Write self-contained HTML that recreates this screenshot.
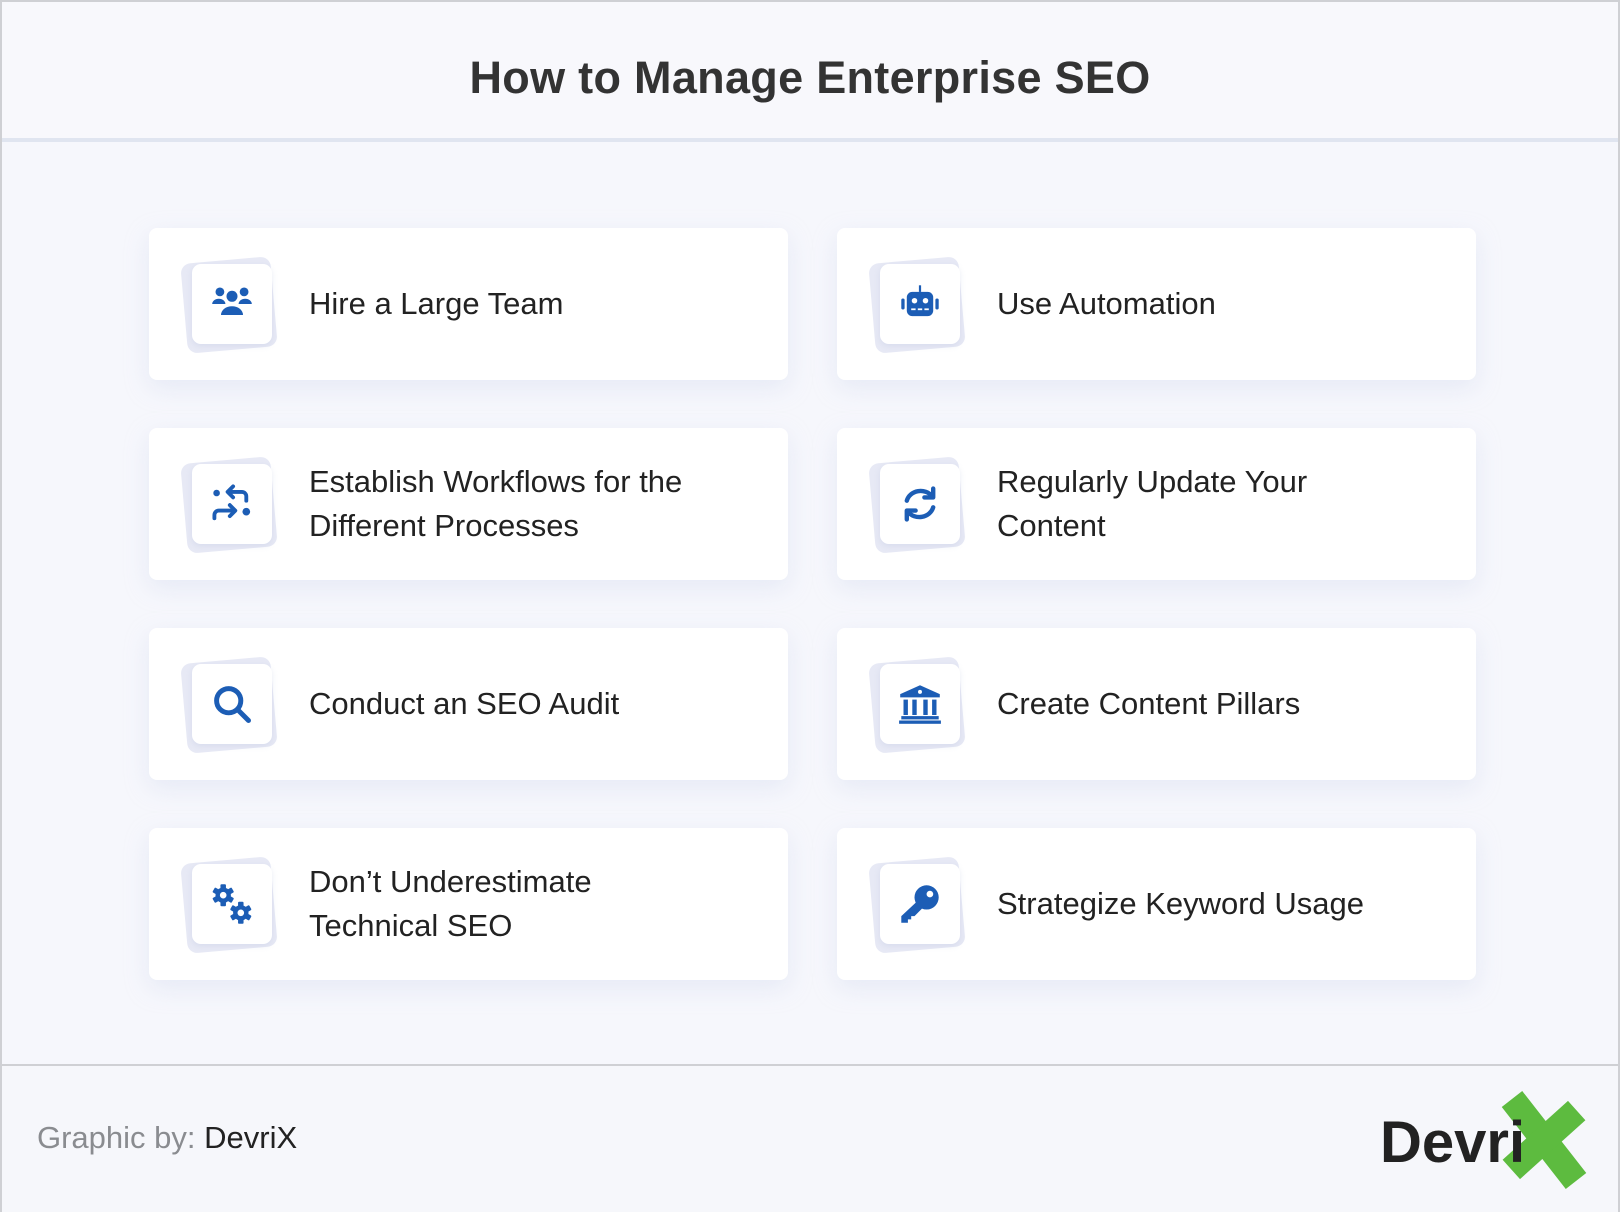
<!DOCTYPE html>
<html><head><meta charset="utf-8"><style>
*{margin:0;padding:0;box-sizing:border-box}
body{width:1620px;height:1212px;background:#f6f7fc;font-family:"Liberation Sans",sans-serif;position:relative;overflow:hidden;border:2px solid #cfd0d4}
.hdr{position:absolute;left:0;top:0;width:1616px;height:140px;background:#f8f8fc;border-bottom:4px solid #e0e5f0}
h1{position:absolute;left:0;right:0;top:50px;text-align:center;font-size:45px;font-weight:bold;color:#333;letter-spacing:0.3px}
.card{position:absolute;width:639px;height:152px;background:#fff;border-radius:8px;box-shadow:0 8px 24px rgba(200,208,235,0.35)}
.ib{position:absolute;left:43px;top:36px;width:80px;height:80px}
.ib .bk{position:absolute;left:-8px;top:-4px;width:90px;height:90px;background:#e7e9f5;border-radius:10px;transform:rotate(-5deg)}
.ib .fr{position:absolute;left:0;top:0;width:80px;height:80px;background:#fff;border-radius:9px;box-shadow:0 2px 6px rgba(180,190,220,0.3)}
.ib svg{position:absolute;left:18px;top:18px;width:44px;height:44px}
.t{position:absolute;left:160px;top:0;height:152px;display:flex;align-items:center;font-size:31px;line-height:44px;color:#222}
.ftr{position:absolute;left:0;top:1062px;width:1616px;height:148px;border-top:2px solid #cfd0d4;background:#f6f7fb}
.gb{position:absolute;left:35px;top:1118px;font-size:31px;color:#8a8c90}
.gb b{color:#222;font-weight:normal}
</style></head><body>
<div class="hdr"><h1>How to Manage Enterprise SEO</h1></div>

<div class="card" style="left:147px;top:226px"><div class="ib"><div class="bk"></div><div class="fr"></div>
<svg viewBox="0 0 40 40" fill="#1c5db5"><circle cx="9" cy="9" r="4"/><circle cx="31" cy="9" r="4"/><circle cx="20" cy="13" r="5"/><path d="M2 20a5 4 0 0 1 12 0z M26 20a5 4 0 0 1 12 0z M10 30a10 8 0 0 1 20 0z"/></svg></div>
<div class="t">Hire a Large Team</div></div>

<div class="card" style="left:835px;top:226px"><div class="ib"><div class="bk"></div><div class="fr"></div>
<svg viewBox="0 0 40 40" fill="#1c5db5"><rect x="19" y="3" width="2" height="6"/><rect x="8" y="9" width="24" height="22" rx="5"/><rect x="3" y="15" width="3" height="10" rx="1.5"/><rect x="34" y="15" width="3" height="10" rx="1.5"/><circle cx="15" cy="17" r="2.5" fill="#fff"/><circle cx="25" cy="17" r="2.5" fill="#fff"/><rect x="12" y="24" width="4" height="1.6" fill="#fff"/><rect x="18" y="24" width="4" height="1.6" fill="#fff"/><rect x="24" y="24" width="4" height="1.6" fill="#fff"/></svg></div>
<div class="t">Use Automation</div></div>

<div class="card" style="left:147px;top:426px"><div class="ib"><div class="bk"></div><div class="fr"></div>
<svg viewBox="0 0 40 40" fill="none" stroke="#1c5db5" stroke-width="3.5" stroke-linecap="round" stroke-linejoin="round"><circle cx="6" cy="10" r="3" fill="#1c5db5" stroke="none"/><circle cx="33" cy="27" r="3.5" fill="#1c5db5" stroke="none"/><path d="M33 17v-4a4 4 0 0 0-4-4h-12M21 4l-5 5 5 5"/><path d="M4 33v-3a4 4 0 0 1 4-4h14M18 21l5 5-5 5"/></svg></div>
<div class="t">Establish Workflows for the<br>Different Processes</div></div>

<div class="card" style="left:835px;top:426px"><div class="ib"><div class="bk"></div><div class="fr"></div>
<svg viewBox="0 0 40 40" fill="none" stroke="#1c5db5" stroke-width="4" stroke-linecap="round" stroke-linejoin="round"><path d="M8 17a13 12 0 0 1 23-4"/><path d="M32 6v8h-8" /><path d="M32 23a13 12 0 0 1-23 4"/><path d="M8 34v-8h8"/></svg></div>
<div class="t">Regularly Update Your<br>Content</div></div>

<div class="card" style="left:147px;top:626px"><div class="ib"><div class="bk"></div><div class="fr"></div>
<svg viewBox="0 0 40 40" fill="none" stroke="#1c5db5" stroke-width="4.5" stroke-linecap="round"><circle cx="17" cy="17" r="11"/><path d="M25 25l10 10"/></svg></div>
<div class="t">Conduct an SEO Audit</div></div>

<div class="card" style="left:835px;top:626px"><div class="ib"><div class="bk"></div><div class="fr"></div>
<svg viewBox="0 0 40 40" fill="#1c5db5"><path d="M20 3L2 11v3h36v-3z"/><circle cx="20" cy="9" r="1.8" fill="#fff"/><rect x="5" y="16" width="4" height="14"/><rect x="13" y="16" width="4" height="14"/><rect x="23" y="16" width="4" height="14"/><rect x="31" y="16" width="4" height="14"/><rect x="3" y="31" width="34" height="3"/><rect x="1" y="35" width="38" height="3"/></svg></div>
<div class="t">Create Content Pillars</div></div>

<div class="card" style="left:147px;top:826px"><div class="ib"><div class="bk"></div><div class="fr"></div>
<svg viewBox="0 0 40 40" fill="#1c5db5"><g transform="translate(12 12)"><circle r="7"/><g><rect x="-2.5" y="-10" width="5" height="20" rx="1"/><rect x="-2.5" y="-10" width="5" height="20" rx="1" transform="rotate(60)"/><rect x="-2.5" y="-10" width="5" height="20" rx="1" transform="rotate(120)"/></g><circle r="3" fill="#fff"/></g><g transform="translate(28 28)"><circle r="7"/><rect x="-2.5" y="-10" width="5" height="20" rx="1"/><rect x="-2.5" y="-10" width="5" height="20" rx="1" transform="rotate(60)"/><rect x="-2.5" y="-10" width="5" height="20" rx="1" transform="rotate(120)"/><circle r="3" fill="#fff"/></g></svg></div>
<div class="t">Don’t Underestimate<br>Technical SEO</div></div>

<div class="card" style="left:835px;top:826px"><div class="ib"><div class="bk"></div><div class="fr"></div>
<svg viewBox="0 0 40 40" fill="#1c5db5"><circle cx="26" cy="14" r="11"/><circle cx="29" cy="11" r="3" fill="#fff"/><path d="M18 17L3 31v6h6v-3h3v-3h3l8-8z"/></svg></div>
<div class="t">Strategize Keyword Usage</div></div>

<div class="ftr"></div>
<div class="gb">Graphic by: <b>DevriX</b></div>
<svg style="position:absolute;left:1370px;top:1080px" width="240" height="120" viewBox="0 0 240 120">
<g transform="translate(172 58)" fill="#5dbb3f"><rect x="-52" y="-13" width="104" height="26" transform="rotate(52)"/><rect x="-44" y="-13" width="88" height="26" transform="rotate(-42)"/></g>
<text x="8" y="80" font-family="Liberation Sans,sans-serif" font-weight="bold" font-size="58" fill="#222">Devri</text>
</svg>
</body></html>
